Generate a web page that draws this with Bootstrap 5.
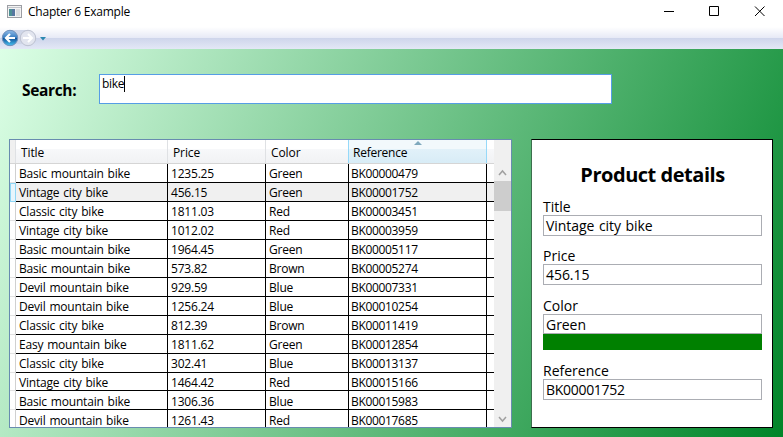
<!DOCTYPE html>
<html lang="en">
<head>
<meta charset="utf-8">
<meta name="viewport" content="width=device-width, initial-scale=1">
<title>Chapter 6 Example</title>
<link href="https://cdn.jsdelivr.net/npm/bootstrap@5.3.0/dist/css/bootstrap.min.css" rel="stylesheet">
<style>
body{font-family:"Open Sans","Noto Sans",sans-serif;font-size:12px;line-height:16px;color:#000;width:783px;height:437px;overflow:hidden}
.titlebar{height:25px;padding:0 18px 2px 7px}
.caption{margin-left:5px;letter-spacing:-.22px}
.navstrip{height:24px;padding:1px 0 0 1px;background:linear-gradient(#fff 0,#fff 2px,#e6e9f6 13px,#ced5eb 13px,#e3e8f6 24px)}
.stage{height:388px;padding:25px 9px 0;background:linear-gradient(114deg,#dcffe6 0,#008529 100%)}
.search-row{height:30px}
.search-label{width:90px;padding-left:13px;font-size:15.5px;font-weight:700;letter-spacing:-.35px;line-height:32px}
.search-box{width:513px;height:30px;background:#fff;border:1px solid #569de5;padding:1px 2px}
.caret{width:1px;height:16px;background:#000}
.typed{letter-spacing:-.3px}
.panels{margin-top:35px;gap:19px}
.grid-box{width:503px;height:289px;border:1px solid #688caf;background:#fff;overflow:hidden}
.rows{width:484px}
.g{display:grid;grid-template-columns:6px 152px 98px 83px 138px 7px}
.g-head{height:24px;background:linear-gradient(#fff 0,#fff 40%,#f7f8fa 41%,#f1f2f4);border-bottom:1px solid #d5d5d5}
.g-head>div{border-right:1px solid #dfe1e4;padding:5px 0 0 5px;letter-spacing:-.1px}
.g-head>div:first-child{background:#f0f0f0;padding:0}
.g-head>div:last-child{border-right:0}
.g-head>.sorted{position:relative;background:linear-gradient(#f2f9fc 0,#f2f9fc 40%,#e1f1f9 41%,#d8ecf6);border:solid #96d9f9;border-width:0 1px 0 1px;margin-left:-1px;padding-left:4px;letter-spacing:-.25px}
.sort-mark{position:absolute;left:65px;top:1px}
.g-row{height:19px}
.g-row>div{border-right:1px solid #000;border-bottom:1px solid #000;padding:2px 0 0 3px;height:inherit;white-space:nowrap;letter-spacing:-.2px;word-spacing:1px}
.g-row>div:nth-child(5){letter-spacing:-.33px;padding-left:2px}
.g-row>div:first-child{border-right-color:#d0d0d0;border-bottom-color:#e2e2e2;padding:0}
.g-row>div:last-child{border-right:0;padding:0}
.g-row:nth-child(12){height:18px}
.g-row:nth-child(n+13)>div{padding-top:3px}
.current>div{background:#f0f0f0}
.current>div:first-child{background:#e6f5fc;border:1px solid #90d6f5}
.scroll{width:17px;background:#f0f0f0;padding:29px 0 4px}
.thumb{height:30px;background:#cdcdcd;margin-top:5px}
.details{width:242px;height:289px;background:#fff;border:1px solid #000;border-left-color:#3c6f4d;padding:21px 10px 0 11px;font-size:14px}
.details h1{font-size:20px;line-height:28px;font-weight:700;letter-spacing:-.47px;margin:0 0 9px}
.lbl{line-height:17px}
.val{height:21px;border:1px solid #abadb3;line-height:20px;padding-left:2px;margin-bottom:11px;letter-spacing:-.05px;word-spacing:1px}
.code{letter-spacing:-.3px}
.color-lbl{padding-top:1px}
.color-val{height:20px}
.swatch{height:16px;background:#008000;margin-bottom:12px}
</style>
</head>
<body>
<header class="titlebar d-flex align-items-center justify-content-between bg-white">
<div class="d-flex align-items-center">
<svg width="16" height="16" viewBox="0 0 16 16"><rect x=".5" y="1.5" width="14" height="12" fill="#f3f3f3" stroke="#9b9da3"/><path d="M1 3.5h13" stroke="#c4c7cc"/><path d="M2 5h6v7H2z" fill="#4c9093"/><path d="M5 5h3v7H5z" fill="#5776a0"/><path d="M9 5h4v7H9z" fill="#dadcdf"/></svg>
<span class="caption">Chapter 6 Example</span></div>
<svg width="101" height="11" viewBox="0 0 101 11" fill="none" stroke="#000"><path d="M0 5.5h10M45.500 .5h9v9h-9zM91 .5l9.500 9.500M100.500 .5L91 10"/></svg>
</header>
<nav class="navstrip">
<svg width="48" height="22" viewBox="0 0 48 22" class="d-block"><defs><linearGradient id="bk" x2="0" y2="1"><stop stop-color="#91bbe8"/><stop offset=".48" stop-color="#367cc1"/><stop offset=".52" stop-color="#125198"/><stop offset="1" stop-color="#48c6f4"/></linearGradient></defs><path d="M9 4h20v14H9z" fill="#cfd6e8"/><circle cx="9" cy="12" r="7.700" fill="url(#bk)" stroke="#6f8fba"/><circle cx="27" cy="12" r="7.700" fill="#e2e5ef" stroke="#bcc1d0"/><path d="M14 12H5M9 8l-4 4 4 4" fill="none" stroke="#fff" stroke-width="2.200"/><path d="M22 12h9M27 8l4 4-4 4" fill="none" stroke="#fff" stroke-width="2"/><path d="M39 11h6l-3 3.500z" fill="#2c88b1"/></svg>
</nav>
<main class="stage">
<div class="search-row d-flex"><label class="search-label">Search:</label><div class="search-box d-flex"><span class="typed">bike</span><span class="caret"></span></div></div>
<div class="panels d-flex">
<section class="grid-box d-flex"><div class="rows">
<div class="g g-head"><div></div><div>Title</div><div>Price</div><div>Color</div><div class="sorted">Reference<svg class="sort-mark" width="8" height="4"><path d="M0 4l4-4 4 4z" fill="#7fa9bd"/></svg></div><div></div></div>
<div id="list"></div></div>
<div class="scroll d-flex flex-column align-items-center"><svg width="9" height="7" fill="none" stroke="#a0a0a0" stroke-width="1.500"><path d="M1 6l3.500-4L8 6"/></svg><div class="thumb w-100"></div><svg class="mt-auto" width="9" height="7" fill="none" stroke="#a0a0a0" stroke-width="1.500"><path d="M1 1l3.500 4L8 1"/></svg></div>
</section>
<aside class="details"><h1 class="text-center">Product details</h1>
<div class="lbl">Title</div><div class="val">Vintage city bike</div>
<div class="lbl">Price</div><div class="val">456.15</div>
<div class="lbl color-lbl">Color</div><div class="val color-val mb-0">Green</div><div class="swatch"></div>
<div class="lbl">Reference</div><div class="val code">BK00001752</div>
</aside></div>
</main>
<script src="https://cdn.jsdelivr.net/npm/bootstrap@5.3.0/dist/js/bootstrap.bundle.min.js"></script>
<script>
const rows=`Basic mountain bike|1235.25|Green|BK00000479
Vintage city bike|456.15|Green|BK00001752
Classic city bike|1811.03|Red|BK00003451
Vintage city bike|1012.02|Red|BK00003959
Basic mountain bike|1964.45|Green|BK00005117
Basic mountain bike|573.82|Brown|BK00005274
Devil mountain bike|929.59|Blue|BK00007331
Devil mountain bike|1256.24|Blue|BK00010254
Classic city bike|812.39|Brown|BK00011419
Easy mountain bike|1811.62|Green|BK00012854
Classic city bike|302.41|Blue|BK00013137
Vintage city bike|1464.42|Red|BK00015166
Basic mountain bike|1306.36|Blue|BK00015983
Devil mountain bike|1261.43|Red|BK00017685`.split('\n');
document.getElementById('list').innerHTML=rows.map((r,i)=>`<div class="g g-row${i==1?' current':''}"><div></div>${r.split('|').map(c=>`<div>${c}</div>`).join('')}<div></div></div>`).join('');
</script>
</body>
</html>
